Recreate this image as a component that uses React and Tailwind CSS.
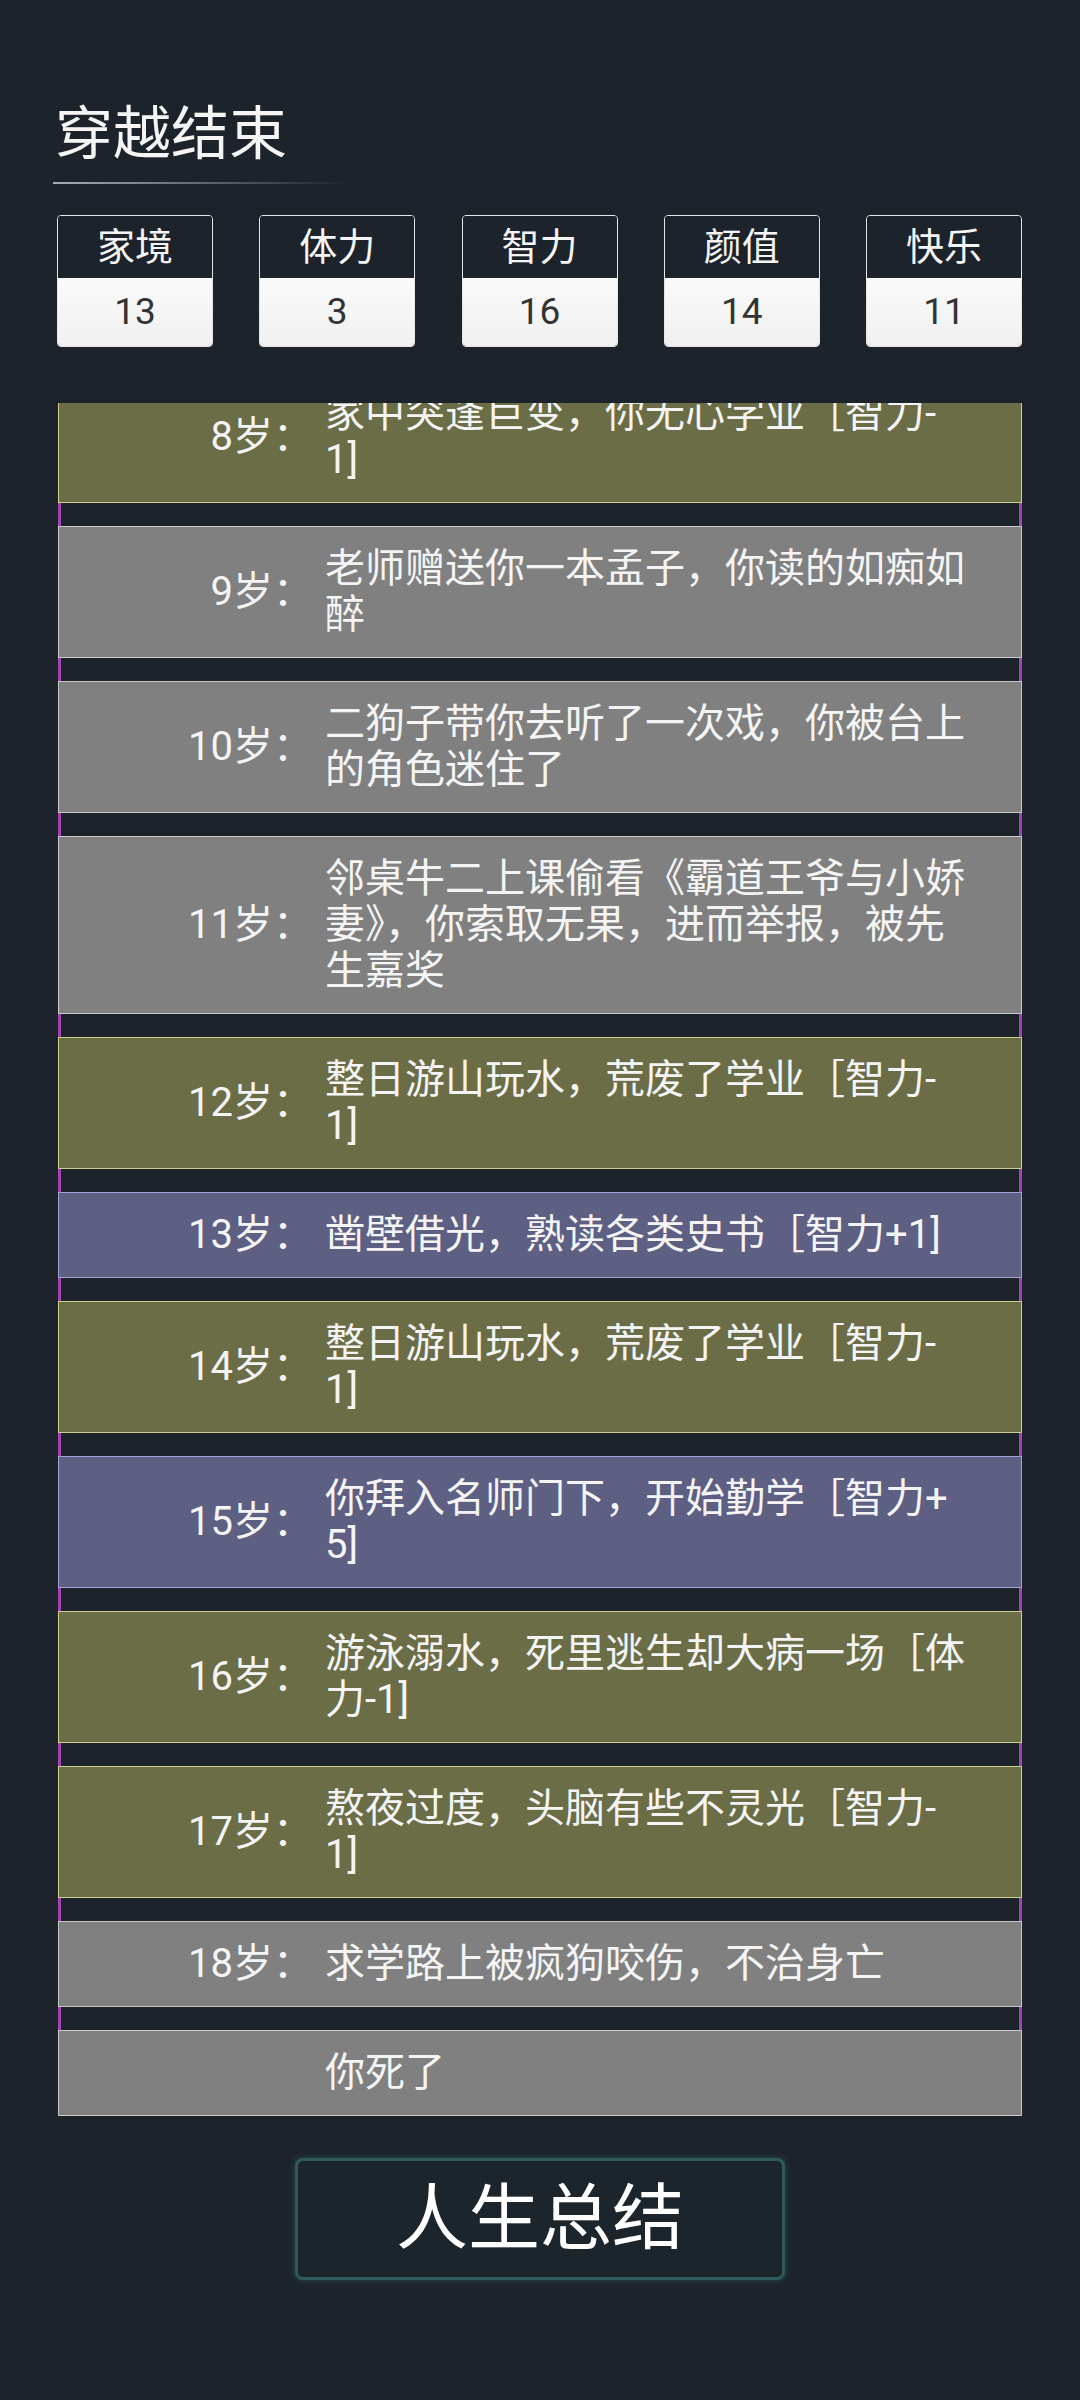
import React from 'react';

// stats shown at the top
const stats = [
    { label: '家境', value: 13 },
    { label: '体力', value: 3 },
    { label: '智力', value: 16 },
    { label: '颜值', value: 14 },
    { label: '快乐', value: 11 },
];

// each line is written out the way the game wraps it
const events = [
    { age: '8岁：', lines: ['家中突逢巨变，你无心学业［智力-', '1]'], tone: 'olive' },
    { age: '9岁：', lines: ['老师赠送你一本孟子，你读的如痴如', '醉'], tone: 'gray' },
    { age: '10岁：', lines: ['二狗子带你去听了一次戏，你被台上', '的角色迷住了'], tone: 'gray' },
    { age: '11岁：', lines: ['邻桌牛二上课偷看《霸道王爷与小娇', '妻》，你索取无果，进而举报，被先', '生嘉奖'], tone: 'gray' },
    { age: '12岁：', lines: ['整日游山玩水，荒废了学业［智力-', '1]'], tone: 'olive' },
    { age: '13岁：', lines: ['凿壁借光，熟读各类史书［智力+1]'], tone: 'blue' },
    { age: '14岁：', lines: ['整日游山玩水，荒废了学业［智力-', '1]'], tone: 'olive' },
    { age: '15岁：', lines: ['你拜入名师门下，开始勤学［智力+', '5]'], tone: 'blue' },
    { age: '16岁：', lines: ['游泳溺水，死里逃生却大病一场［体', '力-1]'], tone: 'olive' },
    { age: '17岁：', lines: ['熬夜过度，头脑有些不灵光［智力-', '1]'], tone: 'olive' },
    { age: '18岁：', lines: ['求学路上被疯狗咬伤，不治身亡'], tone: 'gray' },
    { age: '', lines: ['你死了'], tone: 'gray' },
];

const toneClass = {
    olive: 'bg-[#6b6d47] border-[#cfd08f]',
    gray: 'bg-[#808080] border-[#c9c9c9]',
    blue: 'bg-[#5d5f83] border-[#a1a3d6]',
};

const App = () => {
    return (
        <div className="w-[1080px] h-[2400px] bg-[#1d232b] font-['Roboto','Noto_Sans_CJK_SC',sans-serif] text-white overflow-hidden">
            {/* Title */}
            <div className="pt-[105px] pl-[55px]">
                <h1 className="text-[58px] leading-[58px] text-[#f5f5f5]">穿越结束</h1>
            </div>
            <div className="ml-[53px] mt-[19px] h-[2px] w-[295px] bg-gradient-to-r from-[#a7adb3] to-transparent"></div>

            {/* Stats */}
            <div className="ml-[57px] mt-[31px] w-[965px] flex justify-between">
                {stats.map((s) => (
                    <div key={s.label} className="w-[156px] h-[132px] rounded-[4px] border border-[#e6e6e6] overflow-hidden flex flex-col">
                        <div className="h-[62px] bg-[#1d232b] flex items-center justify-center text-[38px] text-[#f5f5f5]">
                            {s.label}
                        </div>
                        <div className="flex-1 bg-gradient-to-b from-[#fafafa] to-[#f0f0f0] flex items-center justify-center text-[37px] text-[#333333]">
                            {s.value}
                        </div>
                    </div>
                ))}
            </div>

            {/* Life events (scrolled a little) */}
            <div className="ml-[58px] mt-[56px] w-[964px] overflow-hidden">
                <div className="-mt-[32px] flex flex-col">
                    {events.map((ev, i) => (
                        <React.Fragment key={i}>
                            {i > 0 && <div className="h-[23px] border-x-[3px] border-[#a443b4]"></div>}
                            <div className={`border flex items-center py-[19px] text-[40px] leading-[46px] text-[#f4f4f4] ${toneClass[ev.tone]}`}>
                                <div className="w-[254px] shrink-0 text-right">{ev.age}</div>
                                <div className="ml-[12px]">
                                    {ev.lines.map((line, j) => (
                                        <div key={j} className="whitespace-nowrap">{line}</div>
                                    ))}
                                </div>
                            </div>
                        </React.Fragment>
                    ))}
                </div>
            </div>

            {/* Summary button */}
            <div className="mt-[42px] flex justify-center">
                <button className="w-[490px] h-[122px] rounded-[8px] border-[3px] border-[#2e5a5c] bg-[#1c252c] shadow-[0_0_6px_rgba(60,130,130,0.45)] flex items-center justify-center text-[72px] text-white">
                    人生总结
                </button>
            </div>
        </div>
    );
};

export default App;
